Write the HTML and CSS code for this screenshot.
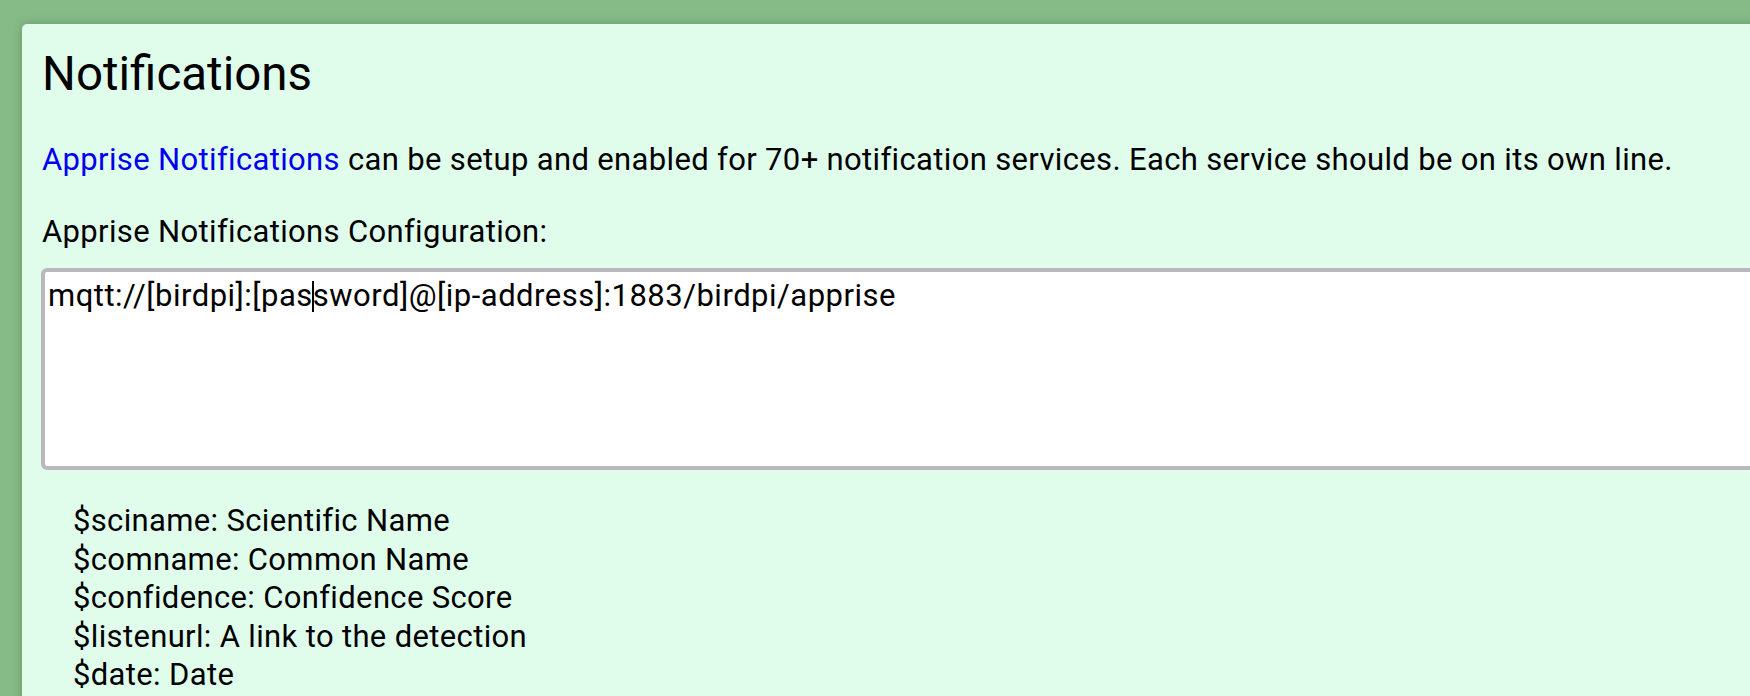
FILE: index.html
```html
<!DOCTYPE html>
<html>
<head>
<meta charset="utf-8">
<link rel="stylesheet" href="styles.css">
</head>
<body>
<div class="card">
  <h1 class="title">Notifications</h1>
  <p class="intro"><a class="link" href="#">Apprise Notifications</a> can be setup and enabled for 70+ notification services. Each service should be on its own line.</p>
  <div class="label">Apprise Notifications Configuration:</div>
  <div class="config" role="textbox" aria-multiline="true">mqtt://[birdpi]:[pas<span class="caret"></span>sword]@[ip-address]:1883/birdpi/apprise</div>
  <ul class="vars">
    <li>$sciname: Scientific Name</li>
    <li>$comname: Common Name</li>
    <li>$confidence: Confidence Score</li>
    <li>$listenurl: A link to the detection</li>
    <li>$date: Date</li>
  </ul>
</div>
</body>
</html>
```
FILE: styles.css
```css
html, body {
  margin: 0;
  padding: 0;
  height: 100%;
  overflow: hidden;
}
body {
  background: #86bb88;
  padding: 24px 0 0 22px;
  box-sizing: border-box;
  font-family: Roboto, "Noto Sans", sans-serif;
  color: #000;
}
.card {
  width: 1800px;
  height: 720px;
  background: #e0fdec;
  border-radius: 5px;
  box-shadow: 0 0 8px rgba(40, 90, 40, 0.35);
  padding: 22px 20px 0 20px;
  box-sizing: border-box;
}
.title {
  margin: 0;
  font-size: 47.5px;
  line-height: 56px;
  font-weight: 400;
}
.intro {
  margin: 41px 0 0 0;
  font-size: 31px;
  letter-spacing: 0.35px;
  line-height: 34px;
}
.link {
  color: #0000ee;
  text-decoration: none;
}
.label {
  margin-top: 38px;
  font-size: 31px;
  letter-spacing: 0.35px;
  line-height: 34px;
}
.config {
  margin: 19px 0 0 -1px;
  width: 1760px;
  height: 202px;
  box-sizing: border-box;
  border: 4px solid #bab8bd;
  border-radius: 6px;
  background: #fff;
  padding: 6px 3px 0 3px;
  font-size: 31px;
  letter-spacing: 0.5px;
  line-height: 36px;
  color: #000;
  white-space: pre-wrap;
}
.caret {
  display: inline-block;
  width: 1.5px;
  height: 31px;
  margin: 0 -0.75px;
  vertical-align: -6px;
  background: #000;
}
.vars {
  list-style: none;
  margin: 32px 0 0 0;
  padding: 0 0 0 31px;
  font-size: 31px;
  letter-spacing: 0.35px;
  line-height: 38.5px;
}
```
